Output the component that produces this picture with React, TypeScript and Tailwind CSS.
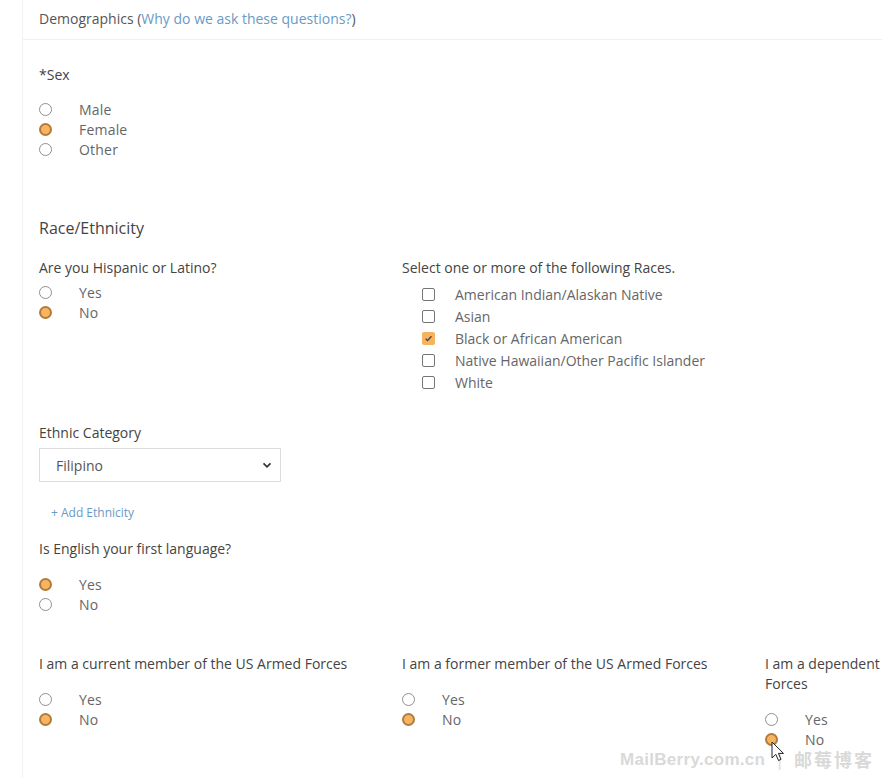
import React from "react";

const Radio = ({ checked }: { checked?: boolean }) =>
  checked ? (
    <span className="inline-block w-[13px] h-[13px] rounded-full bg-[#f7b561] border-2 border-[#b47a3a] shrink-0" />
  ) : (
    <span className="inline-block w-[13px] h-[13px] rounded-full bg-white border border-[#8f8f8f] shrink-0" />
  );

const Check = ({ checked }: { checked?: boolean }) =>
  checked ? (
    <span className="inline-flex items-center justify-center w-[13px] h-[13px] rounded-[2px] bg-[#f5b35e] shrink-0">
      <svg width="9" height="9" viewBox="0 0 10 10">
        <path d="M1.8 5.2 L4 7.3 L8.3 2.6" fill="none" stroke="#4a4a4a" strokeWidth="1.6" />
      </svg>
    </span>
  ) : (
    <span className="inline-block w-[13px] h-[13px] rounded-[2px] bg-white border border-[#767676] shrink-0" />
  );

const RadioRow = ({ label, checked }: { label: string; checked?: boolean }) => (
  <div className="flex items-center h-[20px]">
    <span className="w-[40px] flex items-center">
      <Radio checked={checked} />
    </span>
    <span className="text-[14px] text-[#666] tracking-[0.2px]">{label}</span>
  </div>
);

const CheckRow = ({ label, checked }: { label: string; checked?: boolean }) => (
  <div className="flex items-center h-[22px] pl-[20px]">
    <span className="w-[33px] flex items-center">
      <Check checked={checked} />
    </span>
    <span className="text-[14px] text-[#666]">{label}</span>
  </div>
);

const Q = ({ children }: { children: React.ReactNode }) => (
  <div className="text-[14px] leading-[20px] text-[#444]">{children}</div>
);

export default function App() {
  return (
    <div
      className="relative w-[882px] h-[778px] overflow-hidden bg-white"
      style={{ fontFamily: '"Open Sans", "Noto Sans", sans-serif' }}
    >
      <div className="ml-[22px] w-[1200px] min-h-[778px] border-l border-[#f1f1f1]">
        <div className="h-[40px] px-[16px] pb-[3px] flex items-center border-b border-[#f1f1f1] text-[14px] text-[#555]">
          <span>
            Demographics (<span className="text-[#6a9ac6]">Why do we ask these questions?</span>)
          </span>
        </div>
        <div className="px-[16px]">
          <div className="mt-[25px]">
            <Q>*Sex</Q>
          </div>
          <div className="mt-[14px]">
            <RadioRow label="Male" />
            <RadioRow label="Female" checked />
            <RadioRow label="Other" />
          </div>

          <div className="mt-[58px] text-[16px] leading-[22px] text-[#444]">Race/Ethnicity</div>

          <div className="mt-[19px] grid grid-cols-[363px_363px]">
            <div>
              <Q>Are you Hispanic or Latino?</Q>
              <div className="mt-[4px]">
                <RadioRow label="Yes" />
                <RadioRow label="No" checked />
              </div>
            </div>
            <div>
              <Q>Select one or more of the following Races.</Q>
              <div className="mt-[5px]">
                <CheckRow label="American Indian/Alaskan Native" />
                <CheckRow label="Asian" />
                <CheckRow label="Black or African American" checked />
                <CheckRow label="Native Hawaiian/Other Pacific Islander" />
                <CheckRow label="White" />
              </div>
            </div>
          </div>

          <div className="mt-[30px]">
            <Q>Ethnic Category</Q>
          </div>
          <div className="mt-[5px] w-[242px] h-[34px] border border-[#dcdcdc] flex items-center justify-between pl-[16px] pr-[8px]">
            <span className="text-[14px] text-[#555]">Filipino</span>
            <svg width="10" height="10" viewBox="0 0 10 10">
              <path d="M1.5 3.3 L5 6.8 L8.5 3.3" fill="none" stroke="#333" strokeWidth="1.7" />
            </svg>
          </div>

          <div className="mt-[23px] ml-[12px] text-[12px] leading-[16px] text-[#6a9ac6]">+ Add Ethnicity</div>

          <div className="mt-[18px]">
            <Q>Is English your first language?</Q>
          </div>
          <div className="mt-[15px]">
            <RadioRow label="Yes" checked />
            <RadioRow label="No" />
          </div>

          <div className="mt-[40px] grid grid-cols-[363px_363px_363px]">
            <div className="pr-[15px]">
              <Q>I am a current member of the US Armed Forces</Q>
              <div className="mt-[15px]">
                <RadioRow label="Yes" />
                <RadioRow label="No" checked />
              </div>
            </div>
            <div className="pr-[15px]">
              <Q>I am a former member of the US Armed Forces</Q>
              <div className="mt-[15px]">
                <RadioRow label="Yes" />
                <RadioRow label="No" checked />
              </div>
            </div>
            <div className="pr-[15px]">
              <Q>I am a dependent of a member of the US Armed Forces</Q>
              <div className="mt-[15px]">
                <RadioRow label="Yes" />
                <RadioRow label="No" checked />
              </div>
            </div>
          </div>
        </div>
      </div>

      <div className="absolute left-[620px] top-[746px] flex items-center gap-[10px] text-[#d9d9d9] font-bold select-none">
        <span className="text-[17px] tracking-[0.3px]" style={{ fontFamily: '"Liberation Sans", Arial, sans-serif' }}>
          MailBerry.com.cn
        </span>
        <span className="text-[16px] text-[#e3e3e3]">|</span>
        <span className="text-[18px] tracking-[2px]" style={{ fontFamily: '"Noto Sans CJK SC", sans-serif' }}>
          邮莓博客
        </span>
      </div>

      <svg className="absolute left-[771px] top-[741px]" width="14" height="22" viewBox="0 0 14 22">
        <path d="M1 1 L1 17 L4.8 13.3 L7.5 19.5 L10 18.4 L7.4 12.4 L12.5 12.4 Z" fill="#fff" stroke="#222" strokeWidth="1" />
      </svg>
    </div>
  );
}
